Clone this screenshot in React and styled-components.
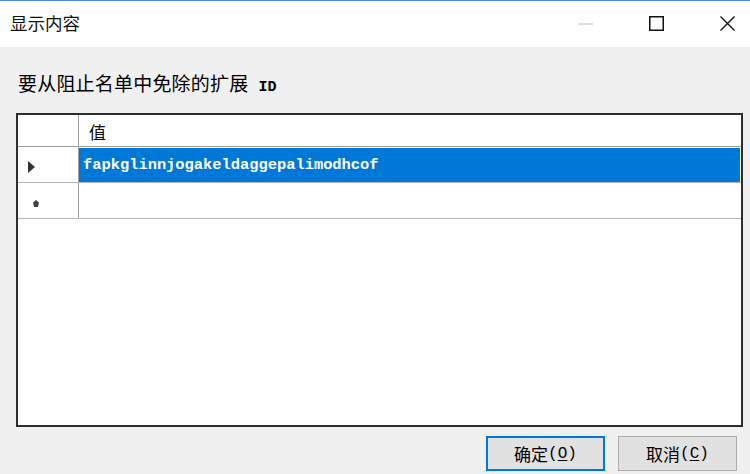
import React from "react";
import styled, { createGlobalStyle } from "styled-components";

const Global = createGlobalStyle`
  html, body { margin: 0; padding: 0; background: #f0f0f0; }
  body { width: 750px; height: 474px; overflow: hidden; font-family: "Noto Sans CJK SC", "Noto Sans", sans-serif; }
`;

const Window = styled.div`
  width: 750px;
  height: 474px;
  display: flex;
  flex-direction: column;
  background: #f0f0f0;
`;

const TitleBar = styled.div`
  height: 46px;
  border-top: 1px solid #4a8fd8;
  background: #ffffff;
  display: flex;
  align-items: center;
  padding-left: 10px;
`;

const Title = styled.div`
  flex: 1;
  font-size: 17.5px;
  color: #111;
  line-height: 1;
  margin-top: -2px;
`;

const Caption = styled.div`
  display: flex;
  gap: 56px;
  padding-right: 15px;
  align-items: center;
`;

const CapIcon = styled.svg`
  width: 15px;
  height: 15px;
  display: block;
  margin-top: -2px;
`;

const Body = styled.div`
  flex: 1;
  display: flex;
  flex-direction: column;
  padding: 0 7px 0 16px;
`;

const Label = styled.div`
  margin-top: 24px;
  height: 24px;
  line-height: 24px;
  padding-left: 2px;
  font-size: 19px;
  color: #000;
  letter-spacing: 0.2px;
`;

const Mono = styled.span`
  font-family: "Liberation Mono", monospace;
  font-size: ${(p) => p.$size || 16}px;
  font-weight: ${(p) => p.$weight || 400};
  margin-left: ${(p) => p.$gap || 0}px;
  letter-spacing: 0;
`;

const Grid = styled.div`
  margin-top: 18px;
  height: 310px;
  border: 2px solid #2d2d2d;
  background: #ffffff;
  display: flex;
  flex-direction: column;
`;

const Row = styled.div`
  display: grid;
  grid-template-columns: 61px 1fr;
  height: ${(p) => p.$h}px;
  border-bottom: 1px solid ${(p) => p.$line || "#b4b4b4"};
`;

const RowHead = styled.div`
  border-right: 1px solid #a0a0a0;
  display: flex;
  align-items: center;
  padding-left: ${(p) => p.$pad || 10}px;
`;

const HeadCell = styled.div`
  display: flex;
  align-items: center;
  padding-left: 10px;
  font-size: 17px;
  color: #000;
  padding-top: 2px;
`;

const Cell = styled.div`
  display: flex;
  align-items: center;
  padding-left: 4px;
  margin-top: ${(p) => (p.$selected ? 1 : 0)}px;
  margin-right: ${(p) => (p.$selected ? 1 : 0)}px;
  background: ${(p) => (p.$selected ? "#0078d7" : "#ffffff")};
  color: ${(p) => (p.$selected ? "#ffffff" : "#000")};
  font-family: "Liberation Mono", monospace;
  font-size: 15.4px;
  font-weight: 600;
`;

const Footer = styled.div`
  display: flex;
  justify-content: flex-end;
  gap: 13px;
  margin-top: 9px;
  padding-right: 6px;
`;

const Button = styled.button`
  width: 119px;
  height: 35px;
  box-sizing: border-box;
  background: #e1e1e1;
  border: ${(p) => (p.$primary ? "2px solid #0078d7" : "1px solid #adadad")};
  font-family: "Noto Sans CJK SC", sans-serif;
  font-size: 17px;
  color: #000;
  padding: 0;
  display: flex;
  align-items: center;
  justify-content: center;
`;

const Key = styled.span`
  text-decoration: underline;
  text-underline-offset: 2px;
`;

export default function App() {
  return (
    <Window>
      <Global />
      <TitleBar>
        <Title>显示内容</Title>
        <Caption>
          <CapIcon viewBox="0 0 15 15">
            <line x1="0" y1="8" x2="15" y2="8" stroke="#c8c8c8" strokeWidth="1.2" />
          </CapIcon>
          <CapIcon viewBox="0 0 15 15">
            <rect x="0.75" y="0.75" width="13.5" height="13.5" fill="none" stroke="#111" strokeWidth="1.5" />
          </CapIcon>
          <CapIcon viewBox="0 0 15 15">
            <path d="M0.5 0.5 L14.5 14.5 M14.5 0.5 L0.5 14.5" stroke="#111" strokeWidth="1.4" />
          </CapIcon>
        </Caption>
      </TitleBar>
      <Body>
        <Label>
          要从阻止名单中免除的扩展<Mono $size={15} $weight={700} $gap={10}>ID</Mono>
        </Label>
        <Grid>
          <Row $h={31} $line="#a0a0a0">
            <RowHead />
            <HeadCell>值</HeadCell>
          </Row>
          <Row $h={35}>
            <RowHead>
              <svg width="7" height="12" viewBox="0 0 7 12" style={{ marginTop: 4 }}>
                <polygon points="0,0 7,6 0,12" fill="#333" />
              </svg>
            </RowHead>
            <Cell $selected>fapkglinnjogakeldaggepalimodhcof</Cell>
          </Row>
          <Row $h={35}>
            <RowHead $pad={15}>
              <svg width="6" height="7" viewBox="0 0 6 7" style={{ marginTop: 5 }}>
                <polygon points="3,0 6,2.5 5,7 1,7 0,2.5" fill="#444" />
              </svg>
            </RowHead>
            <Cell />
          </Row>
        </Grid>
        <Footer>
          <Button $primary>
            确定<Mono $size={16}>(<Key>O</Key>)</Mono>
          </Button>
          <Button>
            取消<Mono $size={16}>(<Key>C</Key>)</Mono>
          </Button>
        </Footer>
      </Body>
    </Window>
  );
}
